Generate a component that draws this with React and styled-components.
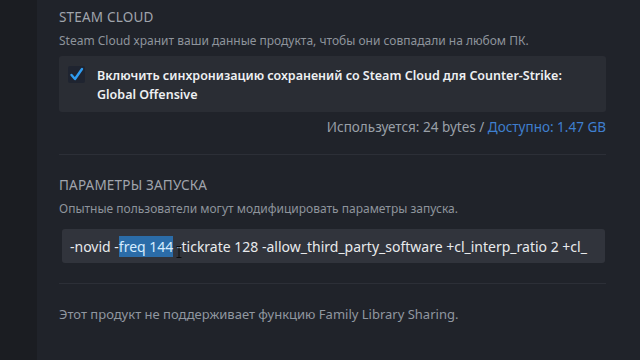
import React from 'react';
import styled, { createGlobalStyle } from 'styled-components';

const GlobalStyle = createGlobalStyle`
  html, body {
    margin: 0;
    padding: 0;
    background: #1f2229;
    overflow: hidden;
  }
  * { box-sizing: border-box; }
`;

// Общий контейнер окна
const Window = styled.div`
  display: flex;
  width: 640px;
  height: 360px;
  background: #20232a;
  font-family: "Noto Sans", "Liberation Sans", sans-serif;
`;

// Тёмная полоса слева
const Sidebar = styled.div`
  width: 37px;
  flex-shrink: 0;
  background: #1b1d22;
`;

const Content = styled.div`
  width: 547px;
  margin-left: 22px;
  display: flex;
  flex-direction: column;
`;

const SectionTitle = styled.div`
  font-size: 13.5px;
  line-height: 18px;
  letter-spacing: 0.2px;
  color: #a0a5ad;
  text-transform: uppercase;
  margin-top: ${(p) => p.$top}px;
`;

const Description = styled.div`
  font-size: 12px;
  line-height: 16px;
  color: #8e949c;
  margin-top: 7px;
`;

const CheckPanel = styled.div`
  display: flex;
  align-items: flex-start;
  gap: 12px;
  margin-top: 7px;
  padding: 10px 10px 8px 9px;
  background: #2a2d34;
  border-radius: 3px;
`;

const CheckBox = styled.div`
  width: 17px;
  height: 17px;
  flex-shrink: 0;
  background: #1f2430;
  border-radius: 2px;
  display: flex;
  align-items: center;
  justify-content: center;
`;

const CheckLabel = styled.div`
  font-size: 12.5px;
  line-height: 19px;
  font-weight: 600;
  color: #eef0f2;
`;

const Usage = styled.div`
  align-self: flex-end;
  margin-top: 6px;
  font-size: 13.5px;
  line-height: 18px;
  color: #9aa0a8;
`;

const Link = styled.span`
  color: #3f7fcf;
`;

const Separator = styled.div`
  height: 1px;
  background: #2c2f37;
  margin-top: ${(p) => p.$top}px;
`;

const LaunchInput = styled.div`
  position: relative;
  margin-top: 12px;
  margin-left: 3px;
  width: 543px;
  height: 34px;
  padding: 0 8px;
  background: #31343c;
  border-radius: 3px;
  display: flex;
  align-items: center;
  overflow: hidden;
  white-space: pre;
  font-size: 14px;
  color: #e8eaec;
`;

const Selected = styled.span`
  background: #2b6ca8;
  color: #d6ecff;
  padding: 1px 0;
`;

const Caret = styled.svg`
  position: absolute;
  left: 114px;
  top: 17px;
`;

const Footer = styled.div`
  margin-top: 21px;
  font-size: 13px;
  line-height: 18px;
  color: #9097a0;
`;

export default function App() {
  return (
    <>
      <GlobalStyle />
      <Window>
        <Sidebar />
        <Content>
          <SectionTitle $top={8}>Steam Cloud</SectionTitle>
          <Description>
            Steam Cloud хранит ваши данные продукта, чтобы они совпадали на любом ПК.
          </Description>
          <CheckPanel>
            <CheckBox>
              <svg width="15" height="15" viewBox="0 0 15 15">
                <path d="M2.5 8 L6 12 L13 2" fill="none" stroke="#2f9cf0" strokeWidth="2.4" strokeLinecap="round" strokeLinejoin="round" />
              </svg>
            </CheckBox>
            <CheckLabel>
              Включить синхронизацию сохранений со Steam Cloud для Counter-Strike: Global Offensive
            </CheckLabel>
          </CheckPanel>
          <Usage>
            Используется: 24 bytes / <Link>Доступно: 1.47 GB</Link>
          </Usage>
          <Separator $top={18} />
          <SectionTitle $top={21}>Параметры запуска</SectionTitle>
          <Description>Опытные пользователи могут модифицировать параметры запуска.</Description>
          <LaunchInput>
            <span>-novid -</span>
            <Selected>freq 144</Selected>
            <span> -tickrate 128 -allow_third_party_software +cl_interp_ratio 2 +cl_</span>
            <Caret width="6" height="12" viewBox="0 0 6 12">
              <path d="M0.5 0.5 H5.5 M3 0.5 V11.5 M0.5 11.5 H5.5" stroke="#0c0c0c" strokeWidth="1" fill="none" />
            </Caret>
          </LaunchInput>
          <Separator $top={20} />
          <Footer>Этот продукт не поддерживает функцию Family Library Sharing.</Footer>
        </Content>
      </Window>
    </>
  );
}
